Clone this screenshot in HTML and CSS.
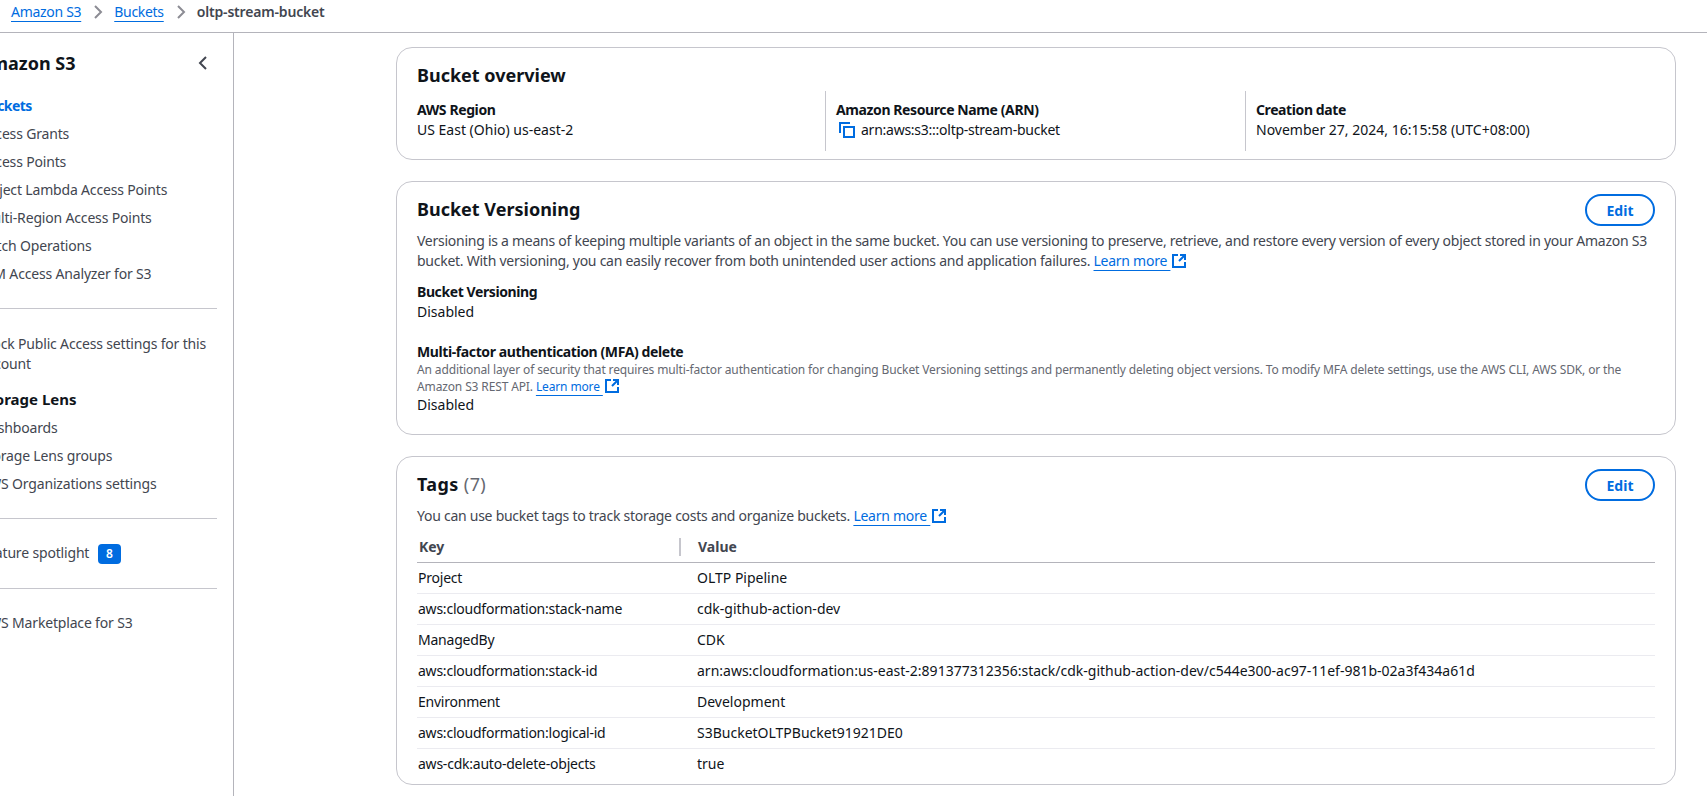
FILE: index.html
```html
<!DOCTYPE html>
<html>
<head>
    <title>oltp-stream-bucket - S3 bucket</title>
    <link rel="stylesheet" href="styles.css">
</head>
<body>
    <nav class="breadcrumbs">
        <a href="#">Amazon S3</a>
        <svg class="crumb-arrow" viewBox="0 0 16 16"><path d="M5 2l6 6-6 6"/></svg>
        <a href="#">Buckets</a>
        <svg class="crumb-arrow" viewBox="0 0 16 16"><path d="M5 2l6 6-6 6"/></svg>
        <span class="crumb-current">oltp-stream-bucket</span>
    </nav>

    <div class="layout">
        <aside class="sidebar">
            <div class="side-head">
                <span class="side-title">Amazon S3</span>
                <svg class="side-close" viewBox="0 0 16 16"><path d="M11 2L5 8l6 6"/></svg>
            </div>
            <ul class="side-list">
                <li class="active">Buckets</li>
                <li>Access Grants</li>
                <li>Access Points</li>
                <li>Object Lambda Access Points</li>
                <li>Multi-Region Access Points</li>
                <li>Batch Operations</li>
                <li>IAM Access Analyzer for S3</li>
            </ul>
            <hr class="side-rule">
            <ul class="side-list">
                <li class="wrap">Block Public Access settings for this account</li>
            </ul>
            <div class="side-section">Storage Lens</div>
            <ul class="side-list">
                <li>Dashboards</li>
                <li>Storage Lens groups</li>
                <li>AWS Organizations settings</li>
            </ul>
            <hr class="side-rule">
            <ul class="side-list">
                <li>Feature spotlight <span class="badge">8</span></li>
            </ul>
            <hr class="side-rule last">
            <ul class="side-list">
                <li>AWS Marketplace for S3</li>
            </ul>
        </aside>

        <main class="content">
            <section class="card overview">
                <h2>Bucket overview</h2>
                <div class="columns">
                    <div class="col">
                        <div class="label">AWS Region</div>
                        <div>US East (Ohio) us-east-2</div>
                    </div>
                    <div class="col">
                        <div class="label">Amazon Resource Name (ARN)</div>
                        <div class="arn">
                            <svg class="copy-icon" viewBox="0 0 16 16"><path d="M1 11V1h10"/><rect x="5" y="5" width="10" height="10"/></svg>
                            arn:aws:s3:::oltp-stream-bucket
                        </div>
                    </div>
                    <div class="col">
                        <div class="label">Creation date</div>
                        <div>November 27, 2024, 16:15:58 (UTC+08:00)</div>
                    </div>
                </div>
            </section>

            <section class="card versioning">
                <div class="card-head">
                    <h2>Bucket Versioning</h2>
                    <button class="edit-btn">Edit</button>
                </div>
                <p class="desc">Versioning is a means of keeping multiple variants of an object in the same bucket. You can use versioning to preserve, retrieve, and restore every version of every object stored in your Amazon S3 bucket. With versioning, you can easily recover from both unintended user actions and application failures. <a href="#">Learn more </a><svg class="ext-icon" viewBox="0 0 16 16"><path d="M7 2H2v12h12V9"/><path d="M9 2h5v5M14 2L8 8"/></svg></p>
                <div class="field">
                    <div class="label">Bucket Versioning</div>
                    <div>Disabled</div>
                </div>
                <div class="field mfa">
                    <div class="label">Multi-factor authentication (MFA) delete</div>
                    <p class="small-desc">An additional layer of security that requires multi-factor authentication for changing Bucket Versioning settings and permanently deleting object versions. To modify MFA delete settings, use the AWS CLI, AWS SDK, or the Amazon S3 REST API. <a href="#">Learn more </a><svg class="ext-icon" viewBox="0 0 16 16"><path d="M7 2H2v12h12V9"/><path d="M9 2h5v5M14 2L8 8"/></svg></p>
                    <div>Disabled</div>
                </div>
            </section>

            <section class="card tags">
                <div class="card-head">
                    <h2>Tags <span class="count">(7)</span></h2>
                    <button class="edit-btn">Edit</button>
                </div>
                <p class="desc">You can use bucket tags to track storage costs and organize buckets. <a href="#">Learn more </a><svg class="ext-icon" viewBox="0 0 16 16"><path d="M7 2H2v12h12V9"/><path d="M9 2h5v5M14 2L8 8"/></svg></p>
                <table class="tag-table">
                    <thead>
                        <tr>
                            <th class="key-col"><span>Key</span></th>
                            <th>Value</th>
                        </tr>
                    </thead>
                    <tbody>
                        <tr><td>Project</td><td>OLTP Pipeline</td></tr>
                        <tr><td>aws:cloudformation:stack-name</td><td>cdk-github-action-dev</td></tr>
                        <tr><td>ManagedBy</td><td>CDK</td></tr>
                        <tr><td>aws:cloudformation:stack-id</td><td>arn:aws:cloudformation:us-east-2:891377312356:stack/cdk-github-action-dev/c544e300-ac97-11ef-981b-02a3f434a61d</td></tr>
                        <tr><td>Environment</td><td>Development</td></tr>
                        <tr><td>aws:cloudformation:logical-id</td><td>S3BucketOLTPBucket91921DE0</td></tr>
                        <tr><td>aws-cdk:auto-delete-objects</td><td>true</td></tr>
                    </tbody>
                </table>
            </section>
        </main>
    </div>
</body>
</html>
```

FILE: styles.css
```css
* {
    box-sizing: border-box;
}
html, body {
    height: 100%;
}
body {
    margin: 0;
    overflow: hidden;
    background-color: #ffffff;
    color: #0f141a;
    font-family: "Noto Sans", "Open Sans", sans-serif;
    font-size: 14px;
    line-height: 20px;
}
a {
    color: #006ce0;
    text-decoration: underline;
    text-underline-offset: 4px;
    text-decoration-thickness: 1px;
}
svg {
    fill: none;
    stroke-width: 2;
}

/* breadcrumbs */
.breadcrumbs {
    display: flex;
    align-items: center;
    height: 33px;
    padding: 0 0 8px 11px;
    border-bottom: 1px solid #b4b4bb;
}
.crumb-arrow {
    width: 16px;
    height: 16px;
    margin: 0 8px 0 9px;
    stroke: #8c8c94;
}
.breadcrumbs a {
    letter-spacing: -0.3px;
}
.crumb-current {
    color: #424650;
    font-weight: 600;
    letter-spacing: -0.18px;
}

.layout {
    display: flex;
    height: 763px;
}

/* side navigation, scrolled off the left edge */
.sidebar {
    flex: 0 0 234px;
    border-right: 1px solid #b4b4bb;
    overflow: hidden;
    color: #424650;
}
.side-head {
    display: flex;
    justify-content: space-between;
    align-items: center;
    height: 24px;
    margin: 18px 22px 0 -22px;
}
.side-title {
    color: #0f141a;
    font-size: 18px;
    font-weight: 700;
}
.side-close {
    width: 16px;
    height: 16px;
    stroke: #424650;
}
.side-list {
    list-style: none;
    margin: 0 16px 0 -20px;
    padding: 0;
}
.side-head + .side-list {
    margin-top: 17px;
}
.side-list li {
    height: 28px;
    padding-top: 4px;
    letter-spacing: -0.17px;
    white-space: nowrap;
}
.side-list li.wrap {
    height: 49px;
    padding-top: 5px;
    white-space: normal;
}
.side-list li.active {
    color: #006ce0;
    font-weight: 700;
    letter-spacing: -0.6px;
}
.side-rule {
    height: 1px;
    margin: 20px 16px 20px 0;
    border: 0;
    background-color: #c6c6cd;
}
.side-rule.last {
    margin-top: 21px;
}
.side-section {
    height: 27px;
    margin: 9px 0 0 -20px;
    color: #0f141a;
    font-size: 15px;
    font-weight: 700;
    line-height: 24px;
}
.badge {
    display: inline-block;
    width: 23px;
    height: 20px;
    margin-left: 5px;
    border-radius: 4px;
    background-color: #006ce0;
    color: #ffffff;
    font-size: 12px;
    font-weight: 600;
    line-height: 20px;
    text-align: center;
}

/* main column */
.content {
    width: 1280px;
    margin-left: 162px;
    padding-top: 14px;
}
.card {
    margin-bottom: 21px;
    padding: 0 20px;
    border: 1px solid #c6c6cd;
    border-radius: 16px;
}
.card h2 {
    margin: 0;
    font-size: 18px;
    font-weight: 700;
    line-height: 24px;
}
.card-head {
    display: flex;
    justify-content: space-between;
    align-items: center;
}
.count {
    color: #656871;
    font-weight: 400;
}
.label {
    font-weight: 700;
    letter-spacing: -0.4px;
}
.desc {
    margin: 0;
    color: #424650;
    letter-spacing: -0.26px;
}
.ext-icon {
    width: 16px;
    height: 16px;
    margin-left: 1px;
    stroke: #006ce0;
    vertical-align: -3px;
}
.edit-btn {
    width: 70px;
    height: 32px;
    padding: 0;
    border: 2px solid #006ce0;
    border-radius: 20px;
    background-color: #ffffff;
    color: #006ce0;
    font-family: inherit;
    font-size: 14px;
    font-weight: 700;
}

/* overview card */
.overview {
    height: 113px;
    padding-top: 15px;
}
.columns {
    display: flex;
    margin: 4px 0 0 -12px;
}
.col {
    flex: 0 0 420px;
    height: 60px;
    padding: 9px 0 0 10px;
    border-left: 1px solid #c6c6cd;
}
.col:first-child {
    padding-left: 11px;
    border-left-color: transparent;
}
.arn {
    display: flex;
    align-items: center;
    letter-spacing: -0.25px;
}
.copy-icon {
    width: 16px;
    height: 16px;
    margin: 0 6px 0 3px;
    stroke: #006ce0;
}

/* versioning card */
.versioning {
    height: 254px;
    padding-top: 12px;
}
.versioning .card-head {
    height: 32px;
}
.versioning h2 {
    margin-top: -2px;
}
.versioning .desc {
    margin-top: 5px;
}
.field {
    margin-top: 11px;
}
.field.mfa {
    margin-top: 20px;
}
.small-desc {
    margin: 0;
    color: #656871;
    font-size: 12px;
    letter-spacing: -0.13px;
    line-height: 16px;
}

/* tags card */
.tags {
    height: 329px;
    padding-top: 12px;
}
.tags .card-head {
    height: 32px;
}
.tags h2 {
    margin-top: -3px;
    letter-spacing: 0.4px;
}
.tags .desc {
    margin-top: 5px;
}
.tag-table {
    width: 100%;
    margin-top: 4px;
    border-collapse: collapse;
    table-layout: fixed;
}
.tag-table th {
    height: 32px;
    padding: 2px 0 0 2px;
    border-bottom: 1px solid #b4b4bb;
    color: #424650;
    font-weight: 700;
    text-align: left;
}
.tag-table th.key-col {
    width: 279px;
}
.tag-table th.key-col span {
    display: block;
    width: 262px;
    height: 18px;
    border-right: 2px solid #c6c6cd;
    line-height: 18px;
}
.tag-table td {
    height: 31px;
    padding: 0 0 0 1px;
    border-bottom: 1px solid #ebebf0;
}
.tag-table td:first-child {
    letter-spacing: -0.23px;
}
.tag-table tr:last-child td {
    border-bottom: 0;
}
```
